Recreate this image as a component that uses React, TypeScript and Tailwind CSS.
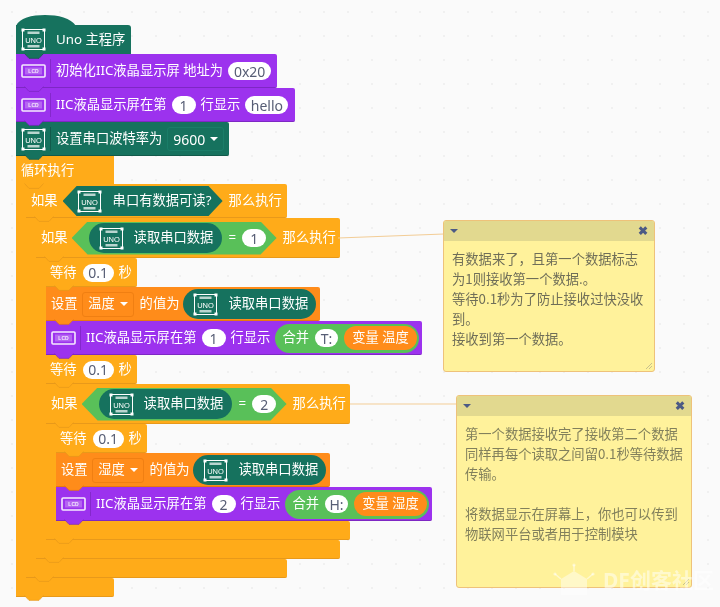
import type { ReactNode } from 'react'

const FONT = "font-['Noto_Sans','Noto_Sans_CJK_SC',sans-serif]"

function UnoIcon() {
  return (
    <svg width="25" height="23" viewBox="0 0 25 23" fill="none" className="shrink-0">
      <rect x="1.5" y="1.5" width="22" height="20" stroke="white" strokeWidth="1" />
      <rect x="0.5" y="0.5" width="3" height="3" fill="white" />
      <rect x="21.5" y="0.5" width="3" height="3" fill="white" />
      <rect x="0.5" y="19.5" width="3" height="3" fill="white" />
      <rect x="21.5" y="19.5" width="3" height="3" fill="white" />
      <rect x="6.5" y="3.5" width="12" height="2.5" fill="white" fillOpacity="0.7" />
      <rect x="6.5" y="17" width="12" height="2.5" fill="white" fillOpacity="0.7" />
      <text x="12.5" y="14.5" textAnchor="middle" fontSize="7.5" fill="white" fontFamily="Liberation Sans, sans-serif">
        UNO
      </text>
    </svg>
  )
}

function LcdIcon() {
  return (
    <svg width="25" height="14" viewBox="0 0 25 14" fill="none" className="shrink-0">
      <rect x="1" y="1" width="23" height="12" rx="1" stroke="white" strokeOpacity="0.9" strokeWidth="1.6" />
      <rect x="4" y="3.5" width="17" height="7" fill="white" fillOpacity="0.25" />
      <text x="12.5" y="9.2" textAnchor="middle" fontSize="5" fontWeight="700" fill="white" fillOpacity="0.85" fontFamily="Liberation Sans, sans-serif">
        LCD
      </text>
    </svg>
  )
}

function Caret() {
  return <span className="ml-[5px] inline-block border-x-[4px] border-t-[4px] border-x-transparent border-t-white" />
}

function Tab({ color, edge }: { color: string; edge: string }) {
  return (
    <svg width="20" height="6" viewBox="0 0 20 6" className="absolute left-[8px] top-full z-10 -mt-px">
      <path d="M0 0 L5 5 H15 L20 0 Z" fill={color} />
      <path d="M0.5 0.5 L5 5.4 H15 L19.5 0.5" fill="none" stroke={edge} strokeWidth="0.8" />
    </svg>
  )
}

function Pill({ children, className }: { children: ReactNode; className: string }) {
  return (
    <span className={`flex h-[18px] shrink-0 items-center justify-center rounded-full bg-white text-[14px] text-[#575e75] ${className}`}>
      {children}
    </span>
  )
}

function Divider({ color }: { color: string }) {
  return <span className={`mx-[4px] h-[24px] w-px shrink-0 ${color}`} />
}

function UnoBlock({ w, children }: { w: string; children: ReactNode }) {
  return (
    <div className={`relative flex h-[34px] items-center whitespace-nowrap rounded-r-[2px] border-b border-[#125a4b] bg-[#16725e] pl-[5px] pt-px text-white ${w}`}>
      <UnoIcon />
      <Divider color="bg-[#125a4b]" />
      {children}
      <Tab color="#16725e" edge="#125a4b" />
    </div>
  )
}

function LcdBlock({ w, children }: { w: string; children: ReactNode }) {
  return (
    <div className={`relative flex h-[34px] items-center whitespace-nowrap rounded-r-[2px] border-b border-[#7e27c4] bg-[#9c32ee] pl-[5px] pt-px text-white ${w}`}>
      <LcdIcon />
      <Divider color="bg-[#8428cc]" />
      {children}
      <Tab color="#9c32ee" edge="#7e27c4" />
    </div>
  )
}

function Wait() {
  return (
    <div className="relative flex h-[29px] w-[91px] items-center whitespace-nowrap rounded-r-[2px] border-b border-[#e8991a] bg-[#ffab19] pl-[4px] pt-px text-white">
      <span>等待</span>
      <Pill className="ml-[6px] w-[31px]">0.1</Pill>
      <span className="ml-[5px]">秒</span>
      <Tab color="#ffab19" edge="#e8991a" />
    </div>
  )
}

function UnoReporter() {
  return (
    <div className="flex h-[30px] w-[133px] shrink-0 items-center rounded-full bg-[#16725e] pl-[10px] text-white">
      <UnoIcon />
      <span className="ml-[10px]">读取串口数据</span>
    </div>
  )
}

function SetVar({ name }: { name: string }) {
  return (
    <div className="relative flex h-[34px] w-[274px] items-center whitespace-nowrap rounded-r-[2px] border-b border-[#e67a10] bg-[#ff8c1a] pl-[5px] pt-px text-white">
      <span>设置</span>
      <span className="ml-[4px] flex h-[25px] w-[52px] items-center justify-center rounded-[3px] border border-[#f07f12] pl-px">
        {name}
        <Caret />
      </span>
      <span className="ml-[6px] mr-[4px]">的值为</span>
      <UnoReporter />
      <Tab color="#ff8c1a" edge="#e67a10" />
    </div>
  )
}

function JoinShow({ row, label, varName }: { row: string; label: string; varName: string }) {
  return (
    <LcdBlock w="w-[376px]">
      <span className="ml-px">IIC液晶显示屏在第</span>
      <Pill className="ml-[5px] w-[24px]">{row}</Pill>
      <span className="ml-[5px]">行显示</span>
      <div className="ml-[5px] flex h-[29px] w-[144px] shrink-0 items-center rounded-full bg-[#59c059] pl-[7px]">
        <span>合并</span>
        <Pill className="ml-[6px] w-[23px]">{label}</Pill>
        <span className="ml-[6px] flex h-[24px] w-[73px] items-center justify-center rounded-full bg-[#ff8c1a]">变量 {varName}</span>
      </div>
    </LcdBlock>
  )
}

function CompareIf({ n, w }: { n: string; w: string }) {
  return (
    <div className={`relative flex h-[40px] items-center whitespace-nowrap rounded-r-[2px] border-b border-[#e8991a] bg-[#ffab19] pl-[5px] pt-px text-white ${w}`}>
      <span>如果</span>
      <div className="ml-[4px] flex h-[33px] w-[205px] shrink-0 items-center bg-[#59c059] pl-[17px] [clip-path:polygon(0_50%,16px_0,calc(100%-16px)_0,100%_50%,calc(100%-16px)_100%,16px_100%)]">
        <UnoReporter />
        <span className="ml-[7px]">=</span>
        <Pill className="ml-[6px] w-[24px]">{n}</Pill>
      </div>
      <span className="ml-[6px]">那么执行</span>
      <Tab color="#ffab19" edge="#e8991a" />
    </div>
  )
}

// C shaped control block: header, left arm with the inner stack, foot
function CBlock({ header, foot, children }: { header: ReactNode; foot: string; children: ReactNode }) {
  return (
    <div className="flex flex-col items-start">
      {header}
      <div className="flex">
        <div className="w-[10px] self-stretch bg-[#ffab19]" />
        <div className="flex flex-col items-start">{children}</div>
      </div>
      <div className={`relative h-[19px] rounded-r-[2px] border-b border-[#e8991a] bg-[#ffab19] ${foot}`}>
        <Tab color="#ffab19" edge="#e8991a" />
      </div>
    </div>
  )
}

function Note({ lines, className, textColor }: { lines: string[]; className: string; textColor: string }) {
  return (
    <div className={`absolute z-20 flex flex-col overflow-hidden rounded-[3px] border border-[#eec27a] bg-[#fff29b] ${className}`}>
      <div className="flex h-[20px] shrink-0 items-center justify-between bg-[#e2d98f] px-[6px]">
        <span className="inline-block border-x-[4px] border-t-[4px] border-x-transparent border-t-[#4c5a85]" />
        <span className="text-[12px] leading-none font-bold text-[#4c5a85]">✖</span>
      </div>
      <div className={`px-[8px] pt-[8px] font-['Noto_Sans_CJK_SC','Noto_Sans',sans-serif] text-[13.3px] leading-[20px] ${textColor}`}>
        {lines.map((line, i) => (
          <div key={i} className="h-[20px] whitespace-nowrap">
            {line}
          </div>
        ))}
      </div>
      <svg width="8" height="8" viewBox="0 0 8 8" className="absolute bottom-px right-px">
        <path d="M1 7 L7 1 M4 7 L7 4" stroke="#b9b48a" strokeWidth="0.8" />
      </svg>
    </div>
  )
}

export default function App() {
  return (
    <div
      className={`relative h-[607px] w-[720px] overflow-hidden bg-[#fafafa] bg-[radial-gradient(#f0f0f0_1px,transparent_1px)] bg-[length:24px_24px] pl-[16px] pt-[25px] text-[13.3px] blur-[0.45px] ${FONT}`}
    >
      <div className="flex flex-col items-start">
        <div className="relative flex h-[29px] w-[115px] items-center whitespace-nowrap rounded-tr-[3px] bg-[#16725e] pl-[5px] text-white">
          <svg width="60" height="11" viewBox="0 0 60 11" className="absolute bottom-full left-0 -mb-px">
            <path d="M0 11 C3 3 16 0 29 0 C42 0 55 3 60 11 Z" fill="#16725e" />
          </svg>
          <UnoIcon />
          <span className="ml-[10px] pt-px">Uno 主程序</span>
          <Tab color="#16725e" edge="#125a4b" />
        </div>

        <LcdBlock w="w-[261px]">
          <span className="ml-px">初始化IIC液晶显示屏 地址为</span>
          <Pill className="ml-[5px] w-[43px]">0x20</Pill>
        </LcdBlock>
        <LcdBlock w="w-[279px]">
          <span className="ml-px">IIC液晶显示屏在第</span>
          <Pill className="ml-[5px] w-[24px]">1</Pill>
          <span className="ml-[5px]">行显示</span>
          <Pill className="ml-[5px] w-[43px]">hello</Pill>
        </LcdBlock>
        <UnoBlock w="w-[213px]">
          <span className="ml-px">设置串口波特率为</span>
          <span className="ml-[5px] flex h-[24px] w-[57px] items-center justify-center rounded-[3px] border border-[#1a7d68] text-[14px]">
            9600
            <Caret />
          </span>
        </UnoBlock>

        <CBlock
          foot="w-[98px]"
          header={
            <div className="relative flex h-[28px] w-[98px] items-center whitespace-nowrap bg-[#ffab19] pl-[5px] pt-px text-white">
              <span>循环执行</span>
              <Tab color="#ffab19" edge="#e8991a" />
            </div>
          }
        >
          <CBlock
            foot="w-[261px]"
            header={
              <div className="relative flex h-[34px] w-[261px] items-center whitespace-nowrap rounded-r-[2px] border-b border-[#e8991a] bg-[#ffab19] pl-[5px] pt-px text-white">
                <span>如果</span>
                <div className="ml-[5px] flex h-[30px] w-[160px] shrink-0 items-center bg-[#16725e] pl-[14px] [clip-path:polygon(0_50%,14px_0,calc(100%-14px)_0,100%_50%,calc(100%-14px)_100%,14px_100%)]">
                  <UnoIcon />
                  <span className="ml-[11px]">串口有数据可读?</span>
                </div>
                <span className="ml-[6px]">那么执行</span>
                <Tab color="#ffab19" edge="#e8991a" />
              </div>
            }
          >
            <CBlock foot="w-[304px]" header={<CompareIf n="1" w="w-[304px]" />}>
              <Wait />
              <SetVar name="温度" />
              <JoinShow row="1" label="T:" varName="温度" />
              <Wait />
              <CBlock foot="w-[304px]" header={<CompareIf n="2" w="w-[304px]" />}>
                <Wait />
                <SetVar name="湿度" />
                <JoinShow row="2" label="H:" varName="湿度" />
              </CBlock>
            </CBlock>
          </CBlock>
        </CBlock>
      </div>

      <svg width="720" height="607" className="pointer-events-none absolute left-0 top-0">
        <path d="M338 238 L444 234" stroke="#f3cd96" strokeWidth="1" />
        <path d="M350 404 L457 404" stroke="#f3cd96" strokeWidth="1" />
      </svg>

      <Note
        className="left-[443px] top-[220px] h-[152px] w-[212px]"
        textColor="text-[#6f6e58]"
        lines={['有数据来了，且第一个数据标志', '为1则接收第一个数据.。', '等待0.1秒为了防止接收过快没收', '到。', '接收到第一个数据。']}
      />
      <Note
        className="left-[456px] top-[395px] h-[193px] w-[236px]"
        textColor="text-[#82805c]"
        lines={['第一个数据接收完了接收第二个数据', '同样再每个读取之间留0.1秒等待数据', '传输。', '', '将数据显示在屏幕上，你也可以传到', '物联网平台或者用于控制模块']}
      />

      <div className="absolute left-[553px] top-[563px] z-30 flex items-center text-white/50">
        <svg width="42" height="34" viewBox="0 0 42 34" fill="none">
          <path d="M8 16 L21 8 L34 16 V32 H8 Z" fill="white" fillOpacity="0.45" />
          <path d="M21 8 V2 M8 16 L2 11 M34 16 L40 11" stroke="white" strokeOpacity="0.5" strokeWidth="1.5" />
          <circle cx="21" cy="2" r="1.6" fill="white" fillOpacity="0.5" />
          <circle cx="2" cy="11" r="1.6" fill="white" fillOpacity="0.5" />
          <circle cx="40" cy="11" r="1.6" fill="white" fillOpacity="0.5" />
        </svg>
        <span className="ml-[8px] whitespace-nowrap text-[21px] font-bold leading-none">DF创客社区</span>
      </div>
    </div>
  )
}
